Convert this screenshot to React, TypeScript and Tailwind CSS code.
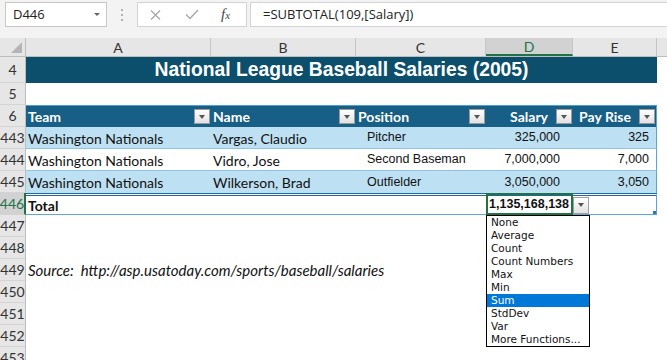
import React from "react";

type DataRow = { n: number; team: string; name: string; pos: string; sal: string; rise: string; band: boolean; last?: boolean };

const rows: DataRow[] = [
  { n: 443, team: "Washington Nationals", name: "Vargas, Claudio", pos: "Pitcher", sal: "325,000", rise: "325", band: true },
  { n: 444, team: "Washington Nationals", name: "Vidro, Jose", pos: "Second Baseman", sal: "7,000,000", rise: "7,000", band: false },
  { n: 445, team: "Washington Nationals", name: "Wilkerson, Brad", pos: "Outfielder", sal: "3,050,000", rise: "3,050", band: true, last: true },
];

const menu = ["None", "Average", "Count", "Count Numbers", "Max", "Min", "Sum", "StdDev", "Var", "More Functions..."];

function RowHead({ n, active }: { n: number; active?: boolean }) {
  return (
    <div
      className={`w-[26px] shrink-0 flex items-center justify-center text-[14px] border-b border-b-[#d4d4d4] ${
        active ? "bg-[#d2d2d2] text-[#217346] border-r-2 border-r-[#217346]" : "bg-[#e6e6e6] text-[#333] border-r border-r-[#bdbdbd]"
      }`}
    >
      {n}
    </div>
  );
}

function FilterBtn() {
  return (
    <div className="w-[16px] h-[15px] shrink-0 bg-linear-to-b from-white to-[#e2e2e2] border border-[#9a9a9a] flex items-center justify-center">
      <div className="w-0 h-0 border-l-[3.5px] border-r-[3.5px] border-t-[4px] border-l-transparent border-r-transparent border-t-[#555]" />
    </div>
  );
}

function FormulaBar() {
  return (
    <div className="h-[38px] bg-[#f3f3f3] flex items-start pt-[2px] font-['Open_Sans',sans-serif]">
      {/* name box */}
      <div className="ml-[5px] w-[102px] h-[25px] bg-white border border-[#c6c6c6] flex items-center pl-[7px] pr-[6px] text-[13px] text-[#222]">
        <span>D446</span>
        <div className="ml-auto w-0 h-0 border-l-[3.5px] border-r-[3.5px] border-t-[3.5px] border-l-transparent border-r-transparent border-t-[#666]" />
      </div>
      {/* grip */}
      <div className="w-[30px] h-[25px] flex flex-col items-center justify-center gap-[3px]">
        <div className="w-[2px] h-[2px] bg-[#b0b0b0]" />
        <div className="w-[2px] h-[2px] bg-[#b0b0b0]" />
        <div className="w-[2px] h-[2px] bg-[#b0b0b0]" />
      </div>
      {/* cancel / enter / fx */}
      <div className="w-[110px] h-[25px] bg-white border border-[#d4d4d4] flex items-center pl-[12px]">
        <svg width="11" height="10" viewBox="0 0 11 10">
          <path d="M1 0.5 L10 9.5 M10 0.5 L1 9.5" stroke="#a8a8a8" strokeWidth="1.3" fill="none" />
        </svg>
        <svg className="ml-[24px]" width="14" height="11" viewBox="0 0 14 11">
          <path d="M1 5.5 L5 9.5 L13 1" stroke="#a8a8a8" strokeWidth="1.4" fill="none" />
        </svg>
        <span className="ml-[22px] font-['Liberation_Serif',serif] italic text-[15px] text-[#444] leading-none">
          f<span className="text-[11px]">x</span>
        </span>
      </div>
      {/* formula */}
      <div className="ml-[3px] flex-1 h-[25px] bg-white border border-[#d4d4d4] border-r-0 pl-[12px] flex items-center text-[13px] text-[#222]">
        =SUBTOTAL(109,[Salary])
      </div>
    </div>
  );
}

function ColumnHeaders() {
  const cols = [
    { l: "A", w: "w-[185px]" },
    { l: "B", w: "w-[145px]" },
    { l: "C", w: "w-[130px]" },
    { l: "D", w: "w-[87px]", active: true },
    { l: "E", w: "w-[84px]" },
  ];
  return (
    <div className="flex h-[19px] bg-[#e6e6e6] border-b border-[#bdbdbd] text-[14px] text-[#333]">
      <div className="w-[26px] shrink-0 border-r border-[#bdbdbd] flex items-end justify-end pr-[3px] pb-[3px]">
        <svg width="11" height="11" viewBox="0 0 11 11">
          <path d="M11 0 L11 11 L0 11 Z" fill="#b5b5b5" />
        </svg>
      </div>
      {cols.map((c) => (
        <div
          key={c.l}
          className={`${c.w} shrink-0 border-r border-[#c6c6c6] flex items-center justify-center ${
            c.active ? "bg-[#d2d2d2] text-[#217346] border-b-2 border-b-[#217346]" : ""
          }`}
        >
          {c.l}
        </div>
      ))}
      <div className="flex-1" />
    </div>
  );
}

export default function App() {
  return (
    <div className="relative w-[667px] h-[360px] overflow-hidden bg-white font-['Lato',sans-serif] text-[#111]">
      <FormulaBar />
      <ColumnHeaders />

      {/* row 4: title */}
      <div className="flex h-[26px]">
        <RowHead n={4} />
        <div className="w-[631px] bg-[#0b4f6c] text-white font-['Liberation_Sans',Arial,sans-serif] font-bold text-[19.3px] flex items-center justify-center">
          National League Baseball Salaries (2005)
        </div>
      </div>

      {/* row 5 */}
      <div className="flex h-[22px]">
        <RowHead n={5} />
      </div>

      {/* row 6: table header */}
      <div className="flex h-[22px]">
        <RowHead n={6} />
        <div className="flex w-[631px] bg-[#175f86] border-t border-t-[#4aa3d8] border-r border-r-[#5aa6d6] text-white font-bold text-[14px]">
          <div className="w-[185px] flex items-center pl-[2px] pr-[1px]">
            <span className="flex-1">Team</span>
            <FilterBtn />
          </div>
          <div className="w-[145px] flex items-center pl-[2px] pr-[1px]">
            <span className="flex-1">Name</span>
            <FilterBtn />
          </div>
          <div className="w-[130px] flex items-center pl-[2px] pr-[1px]">
            <span className="flex-1">Position</span>
            <FilterBtn />
          </div>
          <div className="w-[87px] flex items-center pr-[1px]">
            <span className="flex-1 text-right pr-[8px]">Salary</span>
            <FilterBtn />
          </div>
          <div className="w-[83px] flex items-center pr-[1px]">
            <span className="flex-1 text-right pr-[8px]">Pay Rise</span>
            <FilterBtn />
          </div>
        </div>
      </div>

      {/* data rows */}
      {rows.map((r) => (
        <div key={r.n} className="flex h-[22px]">
          <RowHead n={r.n} />
          <div
            className={`flex w-[631px] border-r border-r-[#5aa6d6] text-[14px] ${r.last ? "" : "border-b border-b-[#8ec5e6]"} ${
              r.band ? "bg-[#bee0f3]" : "bg-white"
            }`}
          >
            <div className="w-[185px] flex items-center pl-[2px] pt-[1px]">{r.team}</div>
            <div className="w-[145px] flex items-center pl-[2px] pt-[1px]">{r.name}</div>
            <div className="w-[130px] flex items-center pl-[11px] font-['Liberation_Sans',Arial,sans-serif] text-[12.5px]">{r.pos}</div>
            <div className="w-[87px] flex items-center justify-end pr-[13px] font-['Liberation_Sans',Arial,sans-serif] text-[12.5px]">{r.sal}</div>
            <div className="w-[83px] flex items-center justify-end pr-[7px] font-['Liberation_Sans',Arial,sans-serif] text-[12.5px]">{r.rise}</div>
          </div>
        </div>
      ))}

      {/* row 446: total */}
      <div className="flex h-[22px]">
        <RowHead n={446} active />
        <div className="flex w-[631px] border-t-[3px] border-double border-t-[#1f6797] border-b border-b-[#5aaad6] border-r border-r-[#5aa6d6] font-bold">
          <div className="w-[185px] flex items-center pl-[2px] text-[14px]">Total</div>
          <div className="w-[145px]" />
          <div className="w-[130px]" />
          <div className="w-[87px] -mt-[3px] h-[22px] border-2 border-[#217346] flex items-center justify-end pr-[2px] font-['Liberation_Sans',Arial,sans-serif] text-[12.5px]">
            1,135,168,138
          </div>
          <div className="w-[83px] flex items-center">
            <div className="w-[16px] h-[17px] bg-linear-to-b from-white to-[#e2e2e2] border border-[#a0a0a0] flex items-center justify-center">
              <div className="w-0 h-0 border-l-[3.5px] border-r-[3.5px] border-t-[4px] border-l-transparent border-r-transparent border-t-[#555]" />
            </div>
            <div className="ml-auto self-end w-[3px] h-[3px] bg-[#2f75b5]" />
          </div>
        </div>
      </div>

      {/* rows 447-453 */}
      {[447, 448, 449, 450, 451, 452, 453].map((n) => (
        <div key={n} className="flex h-[22px]">
          <RowHead n={n} />
          {n === 449 && (
            <div className="pl-[2px] flex items-center italic text-[15px] whitespace-pre">
              Source:  http://asp.usatoday.com/sports/baseball/salaries
            </div>
          )}
        </div>
      ))}

      {/* subtotal dropdown */}
      <div className="absolute left-[486px] top-[215px] w-[104px] bg-white border border-black font-['DejaVu_Sans',sans-serif] text-[10.5px] text-[#111] leading-[13px]">
        {menu.map((m) => (
          <div key={m} className={`h-[13px] pl-[4px] ${m === "Sum" ? "bg-[#0078d7] text-white" : ""}`}>
            {m}
          </div>
        ))}
      </div>
    </div>
  );
}
